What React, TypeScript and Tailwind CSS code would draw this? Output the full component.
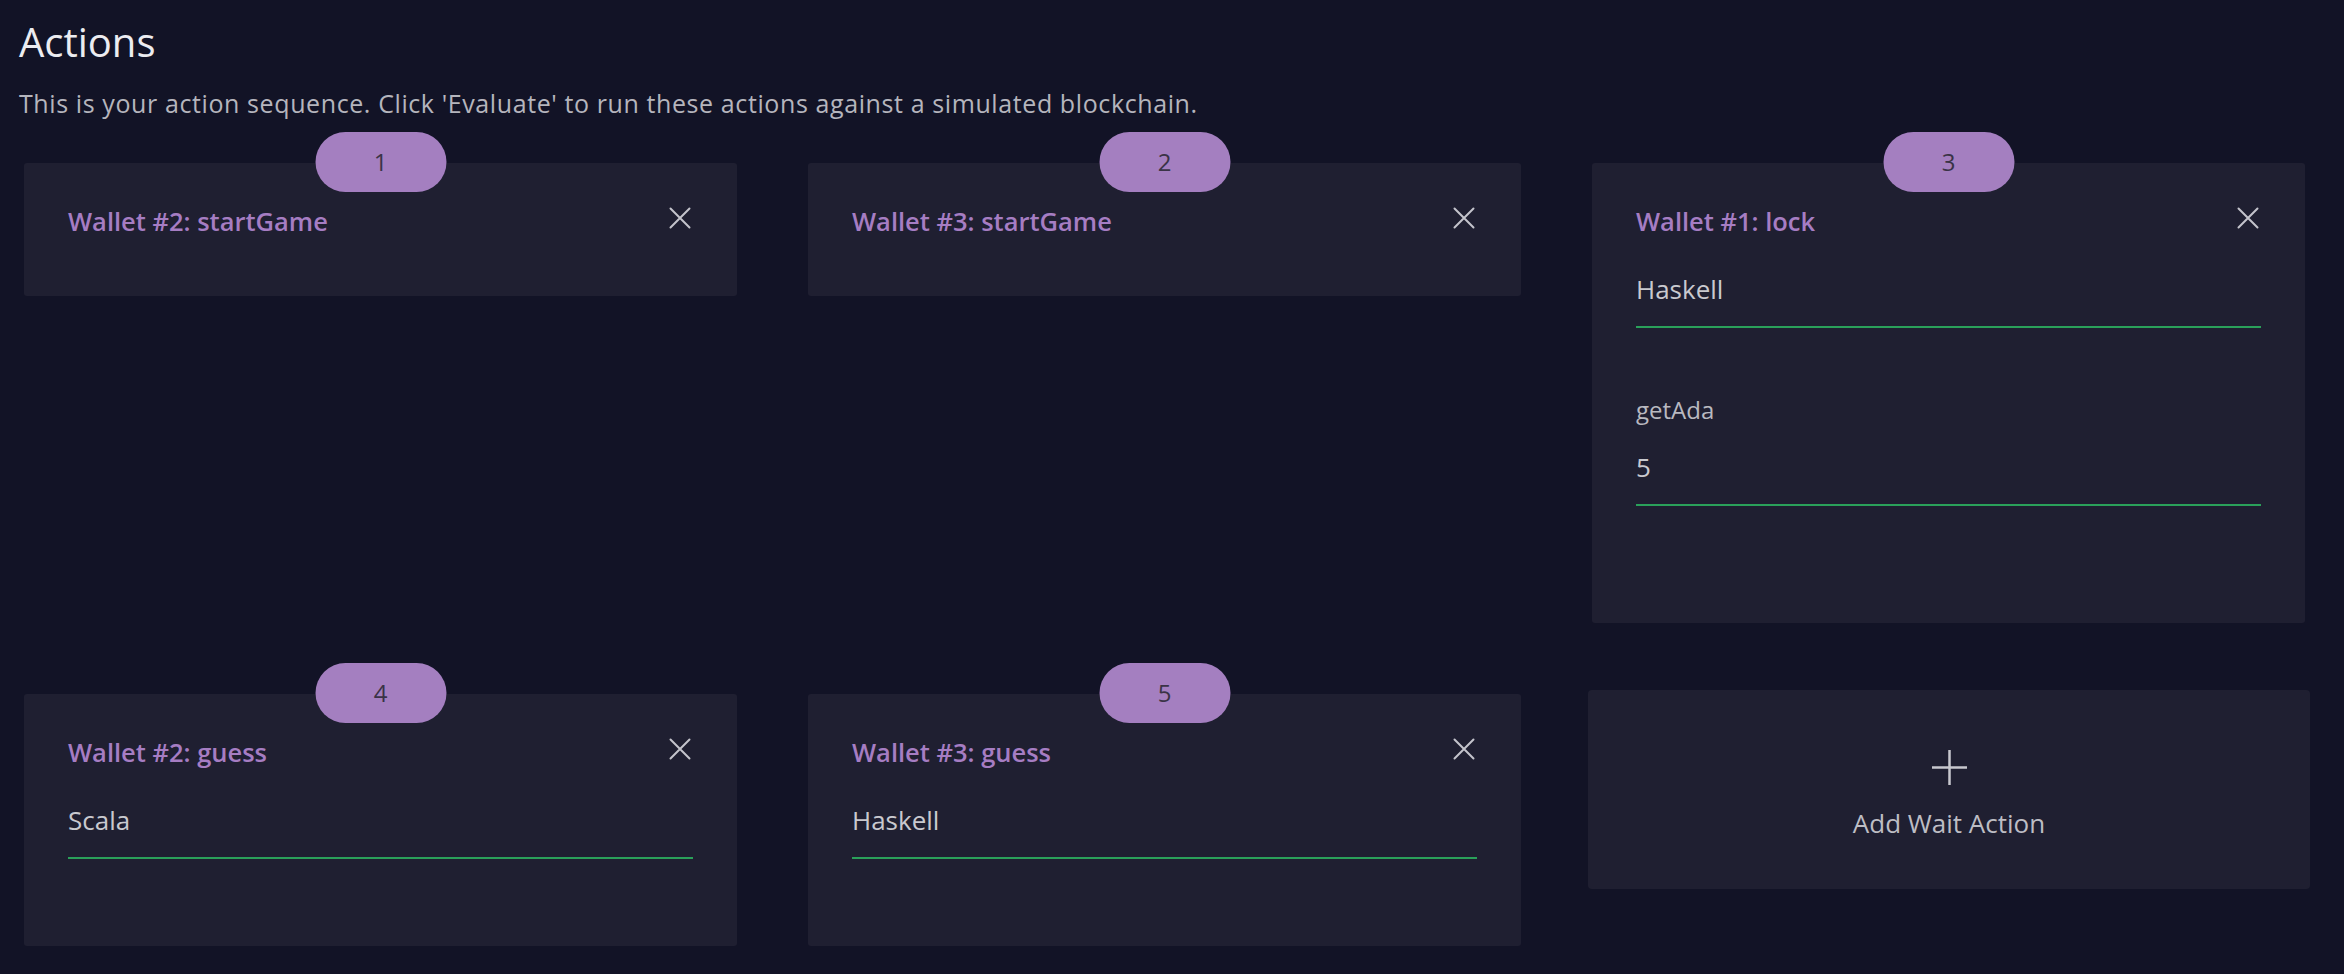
import React from "react";

type Field = { label?: string; value: string };

interface ActionCardProps {
  index: number;
  title: string;
  fields?: Field[];
  bottomPad: string;
}

function CloseIcon() {
  return (
    <svg width="22" height="22" viewBox="0 0 22 22" className="mt-[4px] mr-[2px] shrink-0">
      <path d="M1.5 1.5 L20.5 20.5 M20.5 1.5 L1.5 20.5" stroke="#c4c4cc" strokeWidth="2" strokeLinecap="round" />
    </svg>
  );
}

function ActionCard({ index, title, fields = [], bottomPad }: ActionCardProps) {
  return (
    <div className={`relative rounded-[3px] bg-[#1f1f31] px-[44px] pt-[40px] ${bottomPad}`}>
      {/* step badge sits on the top edge */}
      <div className="absolute left-1/2 top-[-31px] flex h-[60px] w-[131px] -translate-x-1/2 items-center justify-center rounded-full bg-[#a47fc0] text-[24px] text-[#3a3346]">
        {index}
      </div>

      <div className="flex items-start justify-between">
        <span className="text-[25.5px] font-semibold leading-[36px] text-[#a67dc3]">{title}</span>
        <CloseIcon />
      </div>

      {fields.map((f, i) => (
        <div key={i} className={f.label ? "mt-[66px]" : "mt-[32px]"}>
          {f.label && (
            <div className="mb-[23px] text-[24px] leading-[32px] text-[#b9b9c0]">{f.label}</div>
          )}
          <div className="border-b-2 border-[#2aa05a] pb-[19px] text-[26px] leading-[36px] text-[#c9c9cf]">
            {f.value}
          </div>
        </div>
      ))}
    </div>
  );
}

function AddWaitCard() {
  return (
    <div className="-ml-[4px] -mr-[5px] -mt-[4px] flex h-[199px] flex-col items-center rounded-[4px] bg-[#1f1f31] pt-[60px]">
      <svg width="35" height="35" viewBox="0 0 35 35">
        <path d="M17.5 0 V35 M0 17.5 H35" stroke="#c8c8ce" strokeWidth="2.5" />
      </svg>
      <span className="mt-[20px] text-[26px] leading-[36px] text-[#bdbdc4]">Add Wait Action</span>
    </div>
  );
}

export default function App() {
  return (
    <div
      className="min-h-screen bg-[#121326] px-[19px] pt-[18px] pb-[30px]"
      style={{ fontFamily: '"Open Sans", "Noto Sans", sans-serif' }}
    >
      <h1 className="text-[40px] leading-[48px] text-[#ececf0]">Actions</h1>
      <p className="mt-[21px] text-[25px] leading-[32px] tracking-[0.6px] text-[#b5b5bd]">
        This is your action sequence. Click 'Evaluate' to run these actions against a simulated blockchain.
      </p>

      <div className="mx-[5px] mt-[44px] grid grid-cols-[713px_713px_713px] items-start gap-x-[71px] gap-y-[71px]">
        <ActionCard index={1} title="Wallet #2: startGame" bottomPad="pb-[57px]" />
        <ActionCard index={2} title="Wallet #3: startGame" bottomPad="pb-[57px]" />
        <ActionCard
          index={3}
          title="Wallet #1: lock"
          fields={[{ value: "Haskell" }, { label: "getAda", value: "5" }]}
          bottomPad="pb-[117px]"
        />
        <ActionCard index={4} title="Wallet #2: guess" fields={[{ value: "Scala" }]} bottomPad="pb-[87px]" />
        <ActionCard index={5} title="Wallet #3: guess" fields={[{ value: "Haskell" }]} bottomPad="pb-[87px]" />
        <AddWaitCard />
      </div>
    </div>
  );
}
